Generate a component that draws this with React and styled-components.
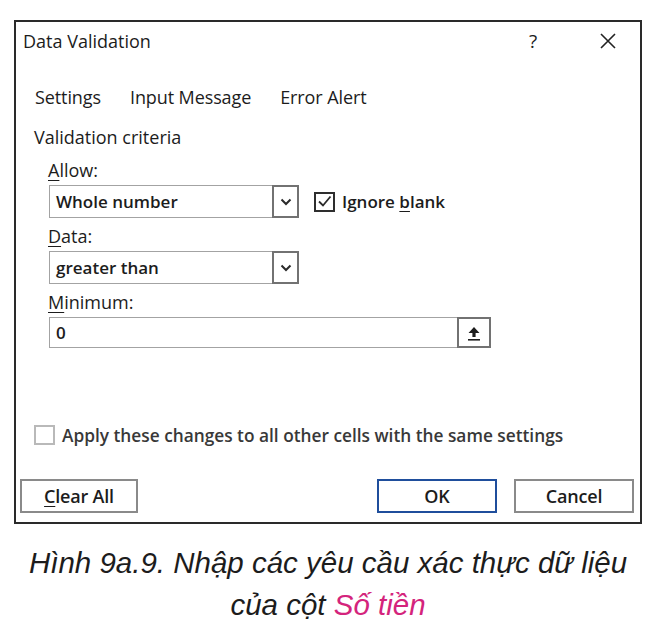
import React from "react";
import styled, { createGlobalStyle } from "styled-components";

const GlobalStyle = createGlobalStyle`
  body {
    margin: 0;
    background: #ffffff;
    font-family: "Open Sans", "Noto Sans", sans-serif;
    color: #1c1c1c;
  }
`;

const Page = styled.div`
  width: 656px;
  height: 633px;
  padding: 20px 0 0 14px;
  box-sizing: border-box;
`;

const Dialog = styled.div`
  width: 628px;
  height: 504px;
  box-sizing: border-box;
  border: 2px solid #2a2a2a;
  display: flex;
  flex-direction: column;
`;

const TitleBar = styled.div`
  height: 38px;
  display: flex;
  align-items: center;
  padding-left: 7px;
`;

const Title = styled.div`
  font-size: 18px;
  flex: 1;
`;

const Help = styled.div`
  font-size: 19px;
  width: 14px;
  text-align: center;
  margin-right: 60px;
`;

const Close = styled.div`
  width: 16px;
  height: 16px;
  margin-right: 24px;
  display: flex;
`;

const TabRow = styled.div`
  display: flex;
  gap: 29px;
  margin-top: 24px;
  padding-left: 19px;
  height: 26px;
  align-items: center;
`;

const Tab = styled.div`
  font-size: 18px;
  font-weight: 500;
  letter-spacing: -0.1px;
`;

const Panel = styled.div`
  padding-left: 18px;
`;

const Section = styled.div`
  font-size: 18px;
  font-weight: 500;
  height: 22px;
  line-height: 22px;
  margin-top: 16px;
`;

const Group = styled.div`
  padding-left: 15px;
`;

const Label = styled.div`
  font-size: 18px;
  font-weight: 500;
  height: 22px;
  line-height: 22px;
  margin-top: ${(p) => p.top}px;
  margin-left: -1px;

  u {
    text-decoration-thickness: 1px;
    text-underline-offset: 3px;
  }
`;

const Row = styled.div`
  display: flex;
  align-items: center;
  margin-top: ${(p) => p.top}px;
  margin-left: ${(p) => p.left || 0}px;
`;

const Combo = styled.div`
  width: 250px;
  height: 33px;
  display: flex;
  box-sizing: border-box;
`;

const Field = styled.div`
  flex: 1;
  border: 1px solid #a3a3a3;
  border-right: none;
  display: flex;
  align-items: center;
  padding-left: 6px;
  font-size: 17px;
  font-weight: 600;
`;

const SideButton = styled.div`
  width: ${(p) => p.w}px;
  border: 2px solid #727272;
  display: flex;
  align-items: center;
  justify-content: center;
  box-sizing: border-box;
`;

const InputBox = styled(Combo)`
  width: 442px;
  height: 31px;
`;

const Check = styled.div`
  width: 21px;
  height: 20px;
  box-sizing: border-box;
  border: 2px solid ${(p) => (p.muted ? "#b9b9b9" : "#2e2e2e")};
  display: flex;
  align-items: center;
  justify-content: center;
`;

const CheckLabel = styled.div`
  font-size: ${(p) => (p.muted ? 17.3 : 17)}px;
  font-weight: 600;
  margin-left: 7px;
  color: ${(p) => (p.muted ? "#383838" : "#1c1c1c")};

  u {
    text-underline-offset: 3px;
  }
`;

const Footer = styled.div`
  margin-top: auto;
  padding-bottom: 9px;
`;

const ApplyRow = styled.div`
  display: flex;
  align-items: center;
  height: 22px;
  padding-left: 18px;
`;

const ButtonRow = styled.div`
  display: flex;
  margin-top: 33px;
  padding: 0 6px 0 4px;
  gap: 17px;
`;

const Button = styled.div`
  width: ${(p) => p.w}px;
  height: 34px;
  box-sizing: border-box;
  border: 2px solid ${(p) => (p.primary ? "#1f4e9c" : "#8a8a8a")};
  display: flex;
  align-items: center;
  justify-content: center;
  font-size: 18px;
  font-weight: 600;
  letter-spacing: -0.2px;
  margin-left: ${(p) => (p.push ? "auto" : "0")};

  u {
    text-underline-offset: 3px;
  }
`;

const Caption = styled.div`
  margin: 18px 0 0 -14px;
  width: 656px;
  text-align: center;
  font-family: "Liberation Sans", Arial, sans-serif;
  font-style: italic;
  font-size: 29.5px;
  line-height: 42px;
  color: #1c1c1c;
`;

const Pink = styled.span`
  color: #d4247c;
`;

const Chevron = () => (
  <svg width="12" height="8" viewBox="0 0 12 8">
    <path d="M1.5 1.5 L6 6 L10.5 1.5" fill="none" stroke="#2a2a2a" strokeWidth="2" />
  </svg>
);

const CheckMark = () => (
  <svg width="15" height="13" viewBox="0 0 15 13">
    <path d="M2 6.5 L6 10.5 L13.5 1.5" fill="none" stroke="#2a2a2a" strokeWidth="1.8" />
  </svg>
);

const Collapse = () => (
  <svg width="14" height="16" viewBox="0 0 14 16">
    <path d="M7 2 L12.5 8 L8.6 8 L8.6 12 L5.4 12 L5.4 8 L1.5 8 Z" fill="#1e1e1e" />
    <rect x="1" y="14" width="12" height="1.6" fill="#1e1e1e" />
  </svg>
);

export default function App() {
  return (
    <Page>
      <GlobalStyle />
      <Dialog>
        <TitleBar>
          <Title>Data Validation</Title>
          <Help>?</Help>
          <Close>
            <svg width="16" height="16" viewBox="0 0 16 16">
              <path d="M1 1 L15 15 M15 1 L1 15" stroke="#222" strokeWidth="1.6" />
            </svg>
          </Close>
        </TitleBar>
        <TabRow>
          <Tab>Settings</Tab>
          <Tab>Input Message</Tab>
          <Tab>Error Alert</Tab>
        </TabRow>
        <Panel>
          <Section>Validation criteria</Section>
          <Group>
            <Label top={11}>
              <u>A</u>llow:
            </Label>
            <Row top={4}>
              <Combo>
                <Field>Whole number</Field>
                <SideButton w={27}>
                  <Chevron />
                </SideButton>
              </Combo>
              <Row top={0} left={15}>
                <Check>
                  <CheckMark />
                </Check>
                <CheckLabel>
                  Ignore <u>b</u>lank
                </CheckLabel>
              </Row>
            </Row>
            <Label top={7}>
              <u>D</u>ata:
            </Label>
            <Row top={4}>
              <Combo>
                <Field>greater than</Field>
                <SideButton w={27}>
                  <Chevron />
                </SideButton>
              </Combo>
            </Row>
            <Label top={7}>
              <u>M</u>inimum:
            </Label>
            <Row top={4}>
              <InputBox>
                <Field>0</Field>
                <SideButton w={34}>
                  <Collapse />
                </SideButton>
              </InputBox>
            </Row>
          </Group>
        </Panel>
        <Footer>
          <ApplyRow>
            <Check muted />
            <CheckLabel muted>
              Apply these changes to all other cells with the same settings
            </CheckLabel>
          </ApplyRow>
          <ButtonRow>
            <Button w={118}>
              <span>
                <u>C</u>lear All
              </span>
            </Button>
            <Button w={120} primary push>
              OK
            </Button>
            <Button w={120}>Cancel</Button>
          </ButtonRow>
        </Footer>
      </Dialog>
      <Caption>
        Hình 9a.9. Nhập các yêu cầu xác thực dữ liệu
        <br />
        của cột <Pink>Số tiền</Pink>
      </Caption>
    </Page>
  );
}
